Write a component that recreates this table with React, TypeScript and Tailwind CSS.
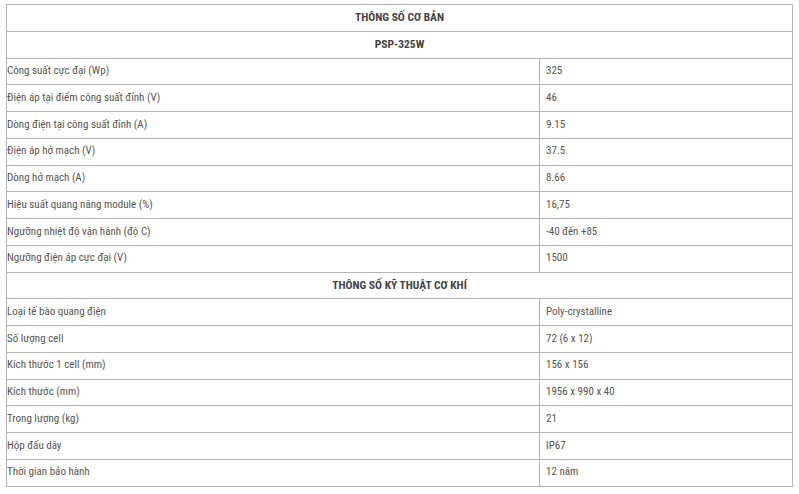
import React from "react";

type Row = { kind: "h"; text: string } | { kind: "r"; a: string; b: string };

const rows: Row[] = [
  { kind: "h", text: "THÔNG SỐ CƠ BẢN" },
  { kind: "h", text: "PSP-325W" },
  { kind: "r", a: "Công suất cực đại (Wp)", b: "325" },
  { kind: "r", a: "Điện áp tại điểm công suất đỉnh (V)", b: "46" },
  { kind: "r", a: "Dòng điện tại công suất đỉnh (A)", b: "9.15" },
  { kind: "r", a: "Điện áp hở mạch (V)", b: "37.5" },
  { kind: "r", a: "Dòng hở mạch (A)", b: "8.66" },
  { kind: "r", a: "Hiệu suất quang năng module (%)", b: "16,75" },
  { kind: "r", a: "Ngưỡng nhiệt độ vận hành (độ C)", b: "-40 đến +85" },
  { kind: "r", a: "Ngưỡng điện áp cực đại (V)", b: "1500" },
  { kind: "h", text: "THÔNG SỐ KỸ THUẬT CƠ KHÍ" },
  { kind: "r", a: "Loại tế bào quang điện", b: "Poly-crystalline" },
  { kind: "r", a: "Số lượng cell", b: "72 (6 x 12)" },
  { kind: "r", a: "Kích thước 1 cell (mm)", b: "156 x 156" },
  { kind: "r", a: "Kích thước (mm)", b: "1956 x 990 x 40" },
  { kind: "r", a: "Trọng lượng (kg)", b: "21" },
  { kind: "r", a: "Hộp đấu dây", b: "IP67" },
  { kind: "r", a: "Thời gian bảo hành", b: "12 năm" },
];

export default function App() {
  return (
    <div className="w-[799px] h-[494px] bg-white pt-[4px] pl-[6px]" style={{ fontFamily: '"Roboto Condensed", "Liberation Sans Narrow", "DejaVu Sans Condensed", Roboto, sans-serif' }}>
      <table className="w-[786px] border-collapse table-fixed text-[11px] text-[#555555]">
        <colgroup>
          <col className="w-[533px]" />
          <col className="w-[253px]" />
        </colgroup>
        <tbody>
          {rows.map((r, i) =>
            r.kind === "h" ? (
              <tr key={i} className="h-[26.75px]">
                <td colSpan={2} className="border border-[#b4b4b4] text-center font-bold text-[11.5px] text-[#444444] p-0">
                  {r.text}
                </td>
              </tr>
            ) : (
              <tr key={i} className="h-[26.75px]">
                <td className="border border-[#b4b4b4] pl-0 py-0 pr-1 align-middle">{r.a}</td>
                <td className="border border-[#b4b4b4] pl-[6px] py-0 pr-1 align-middle">{r.b}</td>
              </tr>
            )
          )}
        </tbody>
      </table>
    </div>
  );
}
